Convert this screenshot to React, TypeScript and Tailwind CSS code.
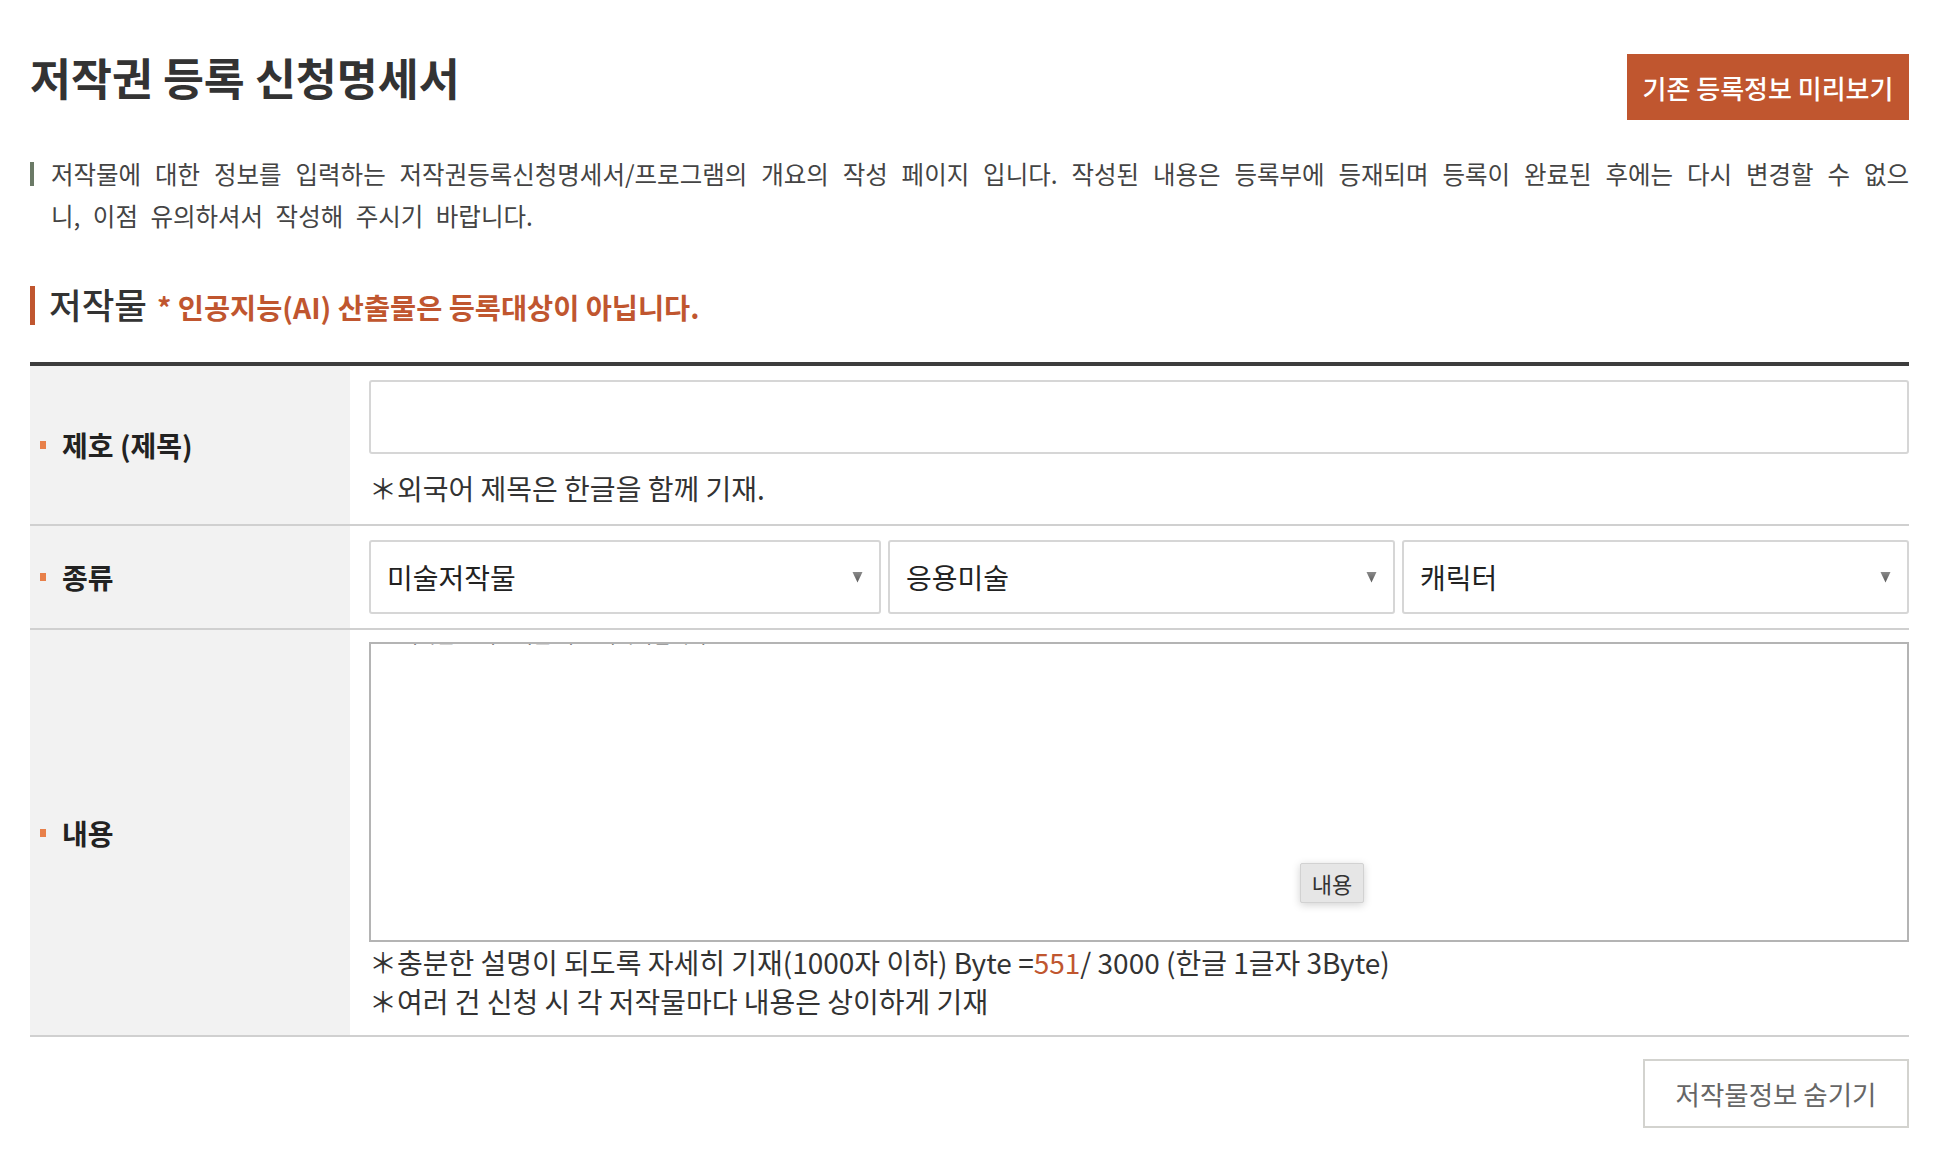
import React from "react";

const FONT = { fontFamily: '"Noto Sans CJK KR", "Noto Sans", sans-serif' };

function Bullet() {
  return <span className="inline-block w-[6px] h-[8px] bg-[#e8804a] mr-[16px] shrink-0" />;
}

function Arrow() {
  return (
    <svg width="11" height="12" viewBox="0 0 11 12" className="shrink-0">
      <defs>
        <linearGradient id="ag" x1="0" y1="0" x2="0" y2="1">
          <stop offset="0" stopColor="#8a8a8a" />
          <stop offset="1" stopColor="#5a5a5a" />
        </linearGradient>
      </defs>
      <path d="M0.5 1 L10.5 1 L5.5 11.5 Z" fill="url(#ag)" />
    </svg>
  );
}

function SelectBox({ label }: { label: string }) {
  return (
    <div className="h-[74px] border-2 border-[#d6d6d6] rounded-[3px] bg-white flex items-center justify-between pl-[16px] pr-[16px]">
      <span className="text-[28px] text-[#222] leading-none">{label}</span>
      <Arrow />
    </div>
  );
}

export default function App() {
  return (
    <div className="w-[1936px] min-h-[1150px] bg-white" style={FONT}>
      <div className="ml-[30px] w-[1879px]">
        {/* header */}
        <div className="flex justify-between items-start pt-[54px]">
          <h1 className="mt-[1px] text-[44.5px] leading-[44px] font-bold text-[#333]">
            저작권 등록 신청명세서
          </h1>
          <button className="w-[282px] h-[66px] bg-[#c0562f] text-white text-[26px] font-medium flex items-center justify-center">
            기존 등록정보 미리보기
          </button>
        </div>

        {/* description */}
        <div className="relative mt-[33px] pl-[21px] text-[24.5px] leading-[42px] text-[#444] [word-spacing:7px]">
          <span className="absolute left-0 top-[9px] w-[4px] h-[24px] bg-[#6b7a66]" />
          <div className="text-justify [text-align-last:justify]">
            저작물에 대한 정보를 입력하는 저작권등록신청명세서/프로그램의 개요의 작성 페이지 입니다. 작성된 내용은 등록부에 등재되며 등록이 완료된 후에는 다시 변경할 수 없으
          </div>
          <div>니, 이점 유의하셔서 작성해 주시기 바랍니다.</div>
        </div>

        {/* section heading */}
        <div className="mt-[49px] flex items-baseline">
          <span className="self-stretch w-[5px] bg-[#c0562f] mr-[14px]" />
          <span className="text-[35.5px] leading-[36px] font-medium text-[#333]">저작물</span>
          <span className="ml-[10px] text-[28.4px] leading-[36px] font-bold text-[#c0562f]">
            * 인공지능(AI) 산출물은 등록대상이 아닙니다.
          </span>
        </div>

        {/* table */}
        <div className="mt-[37px] border-t-4 border-[#3d3d3d]">
          {/* row 1 */}
          <div className="flex border-b-2 border-[#d0d0d0]">
            <div className="w-[320px] shrink-0 bg-[#f2f2f2] flex items-center pl-[10px]">
              <Bullet />
              <span className="text-[28px] font-bold text-[#222]">제호 (제목)</span>
            </div>
            <div className="flex-1 pl-[19px] pt-[14px] pb-[16px]">
              <div className="h-[74px] border-2 border-[#d6d6d6] rounded-[3px] bg-white" />
              <p className="mt-[14px] text-[28px] leading-[40px] text-[#333]">＊외국어 제목은 한글을 함께 기재.</p>
            </div>
          </div>

          {/* row 2 */}
          <div className="flex border-b-2 border-[#d0d0d0]">
            <div className="w-[320px] shrink-0 bg-[#f2f2f2] flex items-center pl-[10px]">
              <Bullet />
              <span className="text-[28px] font-bold text-[#222]">종류</span>
            </div>
            <div className="flex-1 pl-[19px] pt-[14px] pb-[14px] grid grid-cols-[512fr_507fr_507fr] gap-[7px]">
              <SelectBox label="미술저작물" />
              <SelectBox label="응용미술" />
              <SelectBox label="캐릭터" />
            </div>
          </div>

          {/* row 3 */}
          <div className="flex border-b-2 border-[#d0d0d0]">
            <div className="w-[320px] shrink-0 bg-[#f2f2f2] flex items-center pl-[10px]">
              <Bullet />
              <span className="text-[28px] font-bold text-[#222]">내용</span>
            </div>
            <div className="flex-1 pl-[19px] pt-[12px] pb-[14px]">
              <div className="relative h-[300px] border-2 border-[#b4b4b4] bg-white overflow-hidden">
                <p className="mt-[-22px] ml-[6px] text-[20px] leading-[26px] text-[#555] whitespace-nowrap">
                  본 저작물은 어린이를 위한 캐릭터입니다
                </p>
                <div className="absolute left-[929px] top-[219px] w-[64px] h-[40px] bg-[#e6e6e6] border border-[#d2d2d2] rounded-[2px] shadow-[0_2px_8px_rgba(0,0,0,0.18)] flex items-center justify-center text-[22px] text-[#333]">
                  내용
                </div>
              </div>
              <p className="text-[28px] leading-[40px] text-[#333]">
                ＊충분한 설명이 되도록 자세히 기재(1000자 이하) Byte =<span className="text-[#c0562f]">551</span>/ 3000 (한글 1글자 3Byte)
              </p>
              <p className="text-[28px] leading-[39px] text-[#333]">＊여러 건 신청 시 각 저작물마다 내용은 상이하게 기재</p>
            </div>
          </div>
        </div>

        {/* bottom button */}
        <div className="flex justify-end mt-[22px]">
          <button className="w-[266px] h-[69px] border-2 border-[#d3d3cf] bg-white text-[26.5px] text-[#666] flex items-center justify-center">
            저작물정보 숨기기
          </button>
        </div>
      </div>
    </div>
  );
}
